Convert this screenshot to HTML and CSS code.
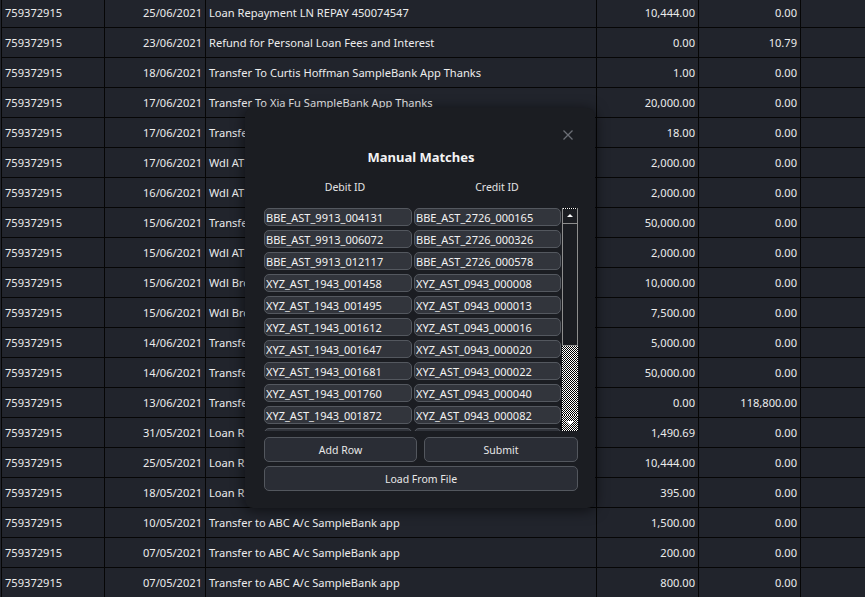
FILE: index.html
```html
<!DOCTYPE html>
<html lang="en">
<head>
<meta charset="utf-8">
<title>Manual Matches</title>
<link rel="stylesheet" href="styles.css">
</head>
<body>
<div class="sheet">
  <div class="row"><div class="c">759372915</div><div class="c r">25/06/2021</div><div class="c">Loan Repayment LN REPAY 450074547</div><div class="c r">10,444.00</div><div class="c r">0.00</div><div class="c"></div></div>
  <div class="row"><div class="c">759372915</div><div class="c r">23/06/2021</div><div class="c">Refund for Personal Loan Fees and Interest</div><div class="c r">0.00</div><div class="c r">10.79</div><div class="c"></div></div>
  <div class="row"><div class="c">759372915</div><div class="c r">18/06/2021</div><div class="c">Transfer To Curtis Hoffman SampleBank App Thanks</div><div class="c r">1.00</div><div class="c r">0.00</div><div class="c"></div></div>
  <div class="row"><div class="c">759372915</div><div class="c r">17/06/2021</div><div class="c">Transfer To Xia Fu SampleBank App Thanks</div><div class="c r">20,000.00</div><div class="c r">0.00</div><div class="c"></div></div>
  <div class="row"><div class="c">759372915</div><div class="c r">17/06/2021</div><div class="c">Transfer</div><div class="c r">18.00</div><div class="c r">0.00</div><div class="c"></div></div>
  <div class="row"><div class="c">759372915</div><div class="c r">17/06/2021</div><div class="c">Wdl ATM</div><div class="c r">2,000.00</div><div class="c r">0.00</div><div class="c"></div></div>
  <div class="row"><div class="c">759372915</div><div class="c r">16/06/2021</div><div class="c">Wdl ATM</div><div class="c r">2,000.00</div><div class="c r">0.00</div><div class="c"></div></div>
  <div class="row"><div class="c">759372915</div><div class="c r">15/06/2021</div><div class="c">Transfer</div><div class="c r">50,000.00</div><div class="c r">0.00</div><div class="c"></div></div>
  <div class="row"><div class="c">759372915</div><div class="c r">15/06/2021</div><div class="c">Wdl ATM</div><div class="c r">2,000.00</div><div class="c r">0.00</div><div class="c"></div></div>
  <div class="row"><div class="c">759372915</div><div class="c r">15/06/2021</div><div class="c">Wdl Brch</div><div class="c r">10,000.00</div><div class="c r">0.00</div><div class="c"></div></div>
  <div class="row"><div class="c">759372915</div><div class="c r">15/06/2021</div><div class="c">Wdl Brch</div><div class="c r">7,500.00</div><div class="c r">0.00</div><div class="c"></div></div>
  <div class="row"><div class="c">759372915</div><div class="c r">14/06/2021</div><div class="c">Transfer</div><div class="c r">5,000.00</div><div class="c r">0.00</div><div class="c"></div></div>
  <div class="row"><div class="c">759372915</div><div class="c r">14/06/2021</div><div class="c">Transfer</div><div class="c r">50,000.00</div><div class="c r">0.00</div><div class="c"></div></div>
  <div class="row"><div class="c">759372915</div><div class="c r">13/06/2021</div><div class="c">Transfer</div><div class="c r">0.00</div><div class="c r">118,800.00</div><div class="c"></div></div>
  <div class="row"><div class="c">759372915</div><div class="c r">31/05/2021</div><div class="c">Loan Rpmt</div><div class="c r">1,490.69</div><div class="c r">0.00</div><div class="c"></div></div>
  <div class="row"><div class="c">759372915</div><div class="c r">25/05/2021</div><div class="c">Loan Rpmt</div><div class="c r">10,444.00</div><div class="c r">0.00</div><div class="c"></div></div>
  <div class="row"><div class="c">759372915</div><div class="c r">18/05/2021</div><div class="c">Loan Rpmt</div><div class="c r">395.00</div><div class="c r">0.00</div><div class="c"></div></div>
  <div class="row"><div class="c">759372915</div><div class="c r">10/05/2021</div><div class="c">Transfer to ABC A/c SampleBank app</div><div class="c r">1,500.00</div><div class="c r">0.00</div><div class="c"></div></div>
  <div class="row"><div class="c">759372915</div><div class="c r">07/05/2021</div><div class="c">Transfer to ABC A/c SampleBank app</div><div class="c r">200.00</div><div class="c r">0.00</div><div class="c"></div></div>
  <div class="row"><div class="c">759372915</div><div class="c r">07/05/2021</div><div class="c">Transfer to ABC A/c SampleBank app</div><div class="c r">800.00</div><div class="c r">0.00</div><div class="c"></div></div>
</div>

<div class="modal">
  <div class="close-row">
    <svg class="close" width="12" height="12" viewBox="0 0 12 12"><path d="M1.5 1.5 L10.5 10.5 M10.5 1.5 L1.5 10.5" stroke="#6c6f76" stroke-width="1.3" fill="none"/></svg>
  </div>
  <div class="title">Manual Matches</div>
  <div class="heads"><span>Debit ID</span><span>Credit ID</span></div>
  <div class="list">
    <div class="rows">
      <input class="field" value="BBE_AST_9913_004131"><input class="field" value="BBE_AST_2726_000165">
      <input class="field" value="BBE_AST_9913_006072"><input class="field" value="BBE_AST_2726_000326">
      <input class="field" value="BBE_AST_9913_012117"><input class="field" value="BBE_AST_2726_000578">
      <input class="field" value="XYZ_AST_1943_001458"><input class="field" value="XYZ_AST_0943_000008">
      <input class="field" value="XYZ_AST_1943_001495"><input class="field" value="XYZ_AST_0943_000013">
      <input class="field" value="XYZ_AST_1943_001612"><input class="field" value="XYZ_AST_0943_000016">
      <input class="field" value="XYZ_AST_1943_001647"><input class="field" value="XYZ_AST_0943_000020">
      <input class="field" value="XYZ_AST_1943_001681"><input class="field" value="XYZ_AST_0943_000022">
      <input class="field" value="XYZ_AST_1943_001760"><input class="field" value="XYZ_AST_0943_000040">
      <input class="field" value="XYZ_AST_1943_001872"><input class="field" value="XYZ_AST_0943_000082">
      <input class="field" value="XYZ_AST_1943_001901"><input class="field" value="XYZ_AST_0943_000091">
    </div>
    <div class="scrollbar">
      <div class="sb-up"><span class="tri-up"></span></div>
      <div class="sb-thumb"></div>
      <div class="sb-trough"></div>
      <div class="sb-down"><span class="tri-down"></span></div>
    </div>
  </div>
  <div class="buttons">
    <button class="btn">Add Row</button>
    <button class="btn">Submit</button>
  </div>
  <button class="btn wide">Load From File</button>
</div>
</body>
</html>
```

FILE: styles.css
```css
html, body {
  margin: 0;
  height: 100%;
  overflow: hidden;
  background: #21242c;
}
body {
  position: relative;
  font-family: "Noto Sans", "Open Sans", sans-serif;
  font-size: 11.1px;
  color: #ececec;
}

/* ---------- table ---------- */
.sheet {
  margin-top: -2px;
  margin-left: 1px;
}
.row {
  display: grid;
  grid-template-columns: 103px 101px 391px 102px 102px 1fr;
  height: 30px;
}
.c {
  box-sizing: border-box;
  border-left: 1px solid #060606;
  border-bottom: 1px solid #060606;
  display: flex;
  align-items: center;
  padding: 0 3px;
  white-space: nowrap;
  overflow: hidden;
}
.c.r {
  justify-content: flex-end;
}

/* ---------- modal ---------- */
.modal {
  position: absolute;
  left: 245px;
  top: 108px;
  width: 350px;
  height: 400px;
  box-sizing: border-box;
  padding: 0 17px 17px 19px;
  background: #1b1d22;
  border-radius: 8px;
  box-shadow: 0 2px 14px rgba(0, 0, 0, 0.6);
  display: flex;
  flex-direction: column;
}
.close-row {
  display: flex;
  justify-content: flex-end;
  padding-top: 21px;
  height: 12px;
}
.close {
  display: block;
  margin-right: 4px;
}
.title {
  margin-top: 7px;
  height: 18px;
  line-height: 18px;
  text-align: center;
  font-size: 13px;
  font-weight: 700;
  color: #f4f4f4;
}
.heads {
  margin-top: 13px;
  height: 16px;
  line-height: 16px;
  padding-left: 5px;
  display: grid;
  grid-template-columns: 152px 152px;
  font-size: 10.5px;
  color: #e4e4e4;
}
.heads span {
  text-align: center;
}
.list {
  margin-top: 13px;
  height: 223px;
  display: flex;
  gap: 1px;
}
.rows {
  width: 297px;
  height: 223px;
  overflow: hidden;
  display: grid;
  grid-template-columns: 148px 147px;
  grid-auto-rows: 18px;
  column-gap: 2px;
  row-gap: 4px;
  align-content: start;
}
.field {
  box-sizing: border-box;
  width: 100%;
  height: 18px;
  margin: 0;
  padding: 0 0 0 1px;
  border: 1px solid #54585f;
  border-radius: 5px;
  background: #32353c;
  color: #f2f2f2;
  font-family: "Noto Sans", "Open Sans", sans-serif;
  font-size: 11px;
  line-height: 16px;
  outline: none;
}

/* ---------- scrollbar ---------- */
.scrollbar {
  width: 16px;
  height: 223px;
  display: flex;
  flex-direction: column;
}
.sb-up {
  box-sizing: border-box;
  height: 16px;
  border-left: 1px solid #8e8e8e;
  border-right: 1px solid #8e8e8e;
  border-bottom: 1px solid #8e8e8e;
  background:
    repeating-linear-gradient(90deg, #ffffff 0 1px, #000000 1px 2px) top / 100% 1px no-repeat,
    #1b1d22;
  display: flex;
  align-items: center;
  justify-content: center;
}
.tri-up {
  width: 0;
  height: 0;
  border-left: 3px solid transparent;
  border-right: 3px solid transparent;
  border-bottom: 3px solid #ffffff;
}
.sb-thumb {
  box-sizing: border-box;
  height: 122px;
  border-left: 1px solid #8e8e8e;
  border-right: 1px solid #8e8e8e;
  border-bottom: 1px solid #8e8e8e;
  background: #1b1d22;
}
.sb-trough {
  flex: 1;
  background: repeating-conic-gradient(#ffffff 0 25%, #000000 0 50%) 0 0 / 2px 2px;
}
.sb-down {
  height: 16px;
  background: repeating-conic-gradient(#ffffff 0 25%, #000000 0 50%) 0 0 / 2px 2px;
  display: flex;
  align-items: center;
  justify-content: center;
}
.tri-down {
  width: 0;
  height: 0;
  border-left: 4px solid transparent;
  border-right: 4px solid transparent;
  border-top: 4px solid #ffffff;
}

/* ---------- buttons ---------- */
.buttons {
  margin-top: 6px;
  display: grid;
  grid-template-columns: 153px 154px;
  column-gap: 7px;
}
.btn {
  box-sizing: border-box;
  height: 25px;
  margin: 0;
  padding: 0;
  border: 1px solid #53575e;
  border-radius: 5px;
  background: #2a2d35;
  color: #e8e8e8;
  font-family: "Noto Sans", "Open Sans", sans-serif;
  font-size: 10.5px;
}
.btn.wide {
  margin-top: 4px;
  width: 100%;
}
```
